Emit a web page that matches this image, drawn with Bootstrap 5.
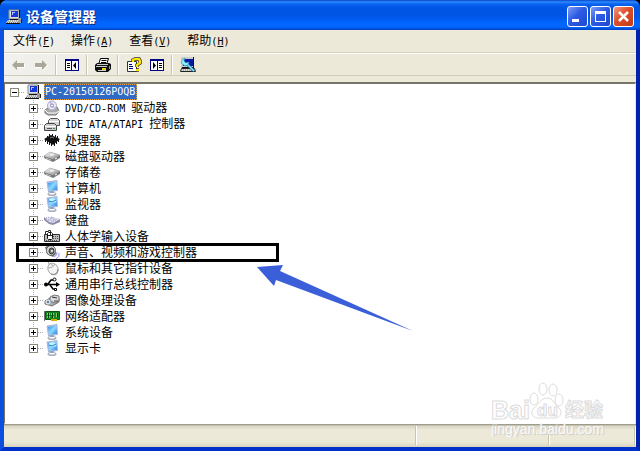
<!DOCTYPE html>
<html lang="zh-CN">
<head>
<meta charset="utf-8">
<meta name="viewport" content="width=device-width, initial-scale=1">
<title>设备管理器</title>
<link href="https://cdn.jsdelivr.net/npm/bootstrap@5.3.0/dist/css/bootstrap.min.css" rel="stylesheet">
<style>
body{background:#000;color:#000;font:12px/16px "Noto Sans CJK SC",sans-serif}
.window{border:solid #0a4fe0;border-width:0 4px 4px;border-color:#0a4fe0 #0022b0 #0030c8 #0a4fe0;border-radius:8px 8px 0 0;background:linear-gradient(90deg,#f1f1ef,#ece9d8 25%)}
.titlebar{height:30px;margin:0 -4px;padding:3px 6px 0;border-radius:7px 7px 0 0;background:linear-gradient(#0a45c8 0,#2a8cff 2px,#0a62f0 4px,#0055e3 8px,#0055e6 16px,#0066ff 23px,#0066ff 27px,#0040c0)}
.caption{font-size:14px;line-height:20px;padding-bottom:2px;font-weight:700;color:#fff;text-shadow:1px 1px #0a2a80}
.controls{gap:2px}
.ctl{width:21px;height:21px;border:1px solid #fff;border-radius:3px;background:linear-gradient(135deg,#7d9df5,#2c5be4 45%,#1f48d0)}
.ctl.quit{background:linear-gradient(135deg,#f09a80,#dd4e2a 45%,#c03a12)}
.menus{height:23px;padding-left:1px;border-bottom:1px solid #d8d2bd}
.menus .btn,.tools .btn{font-size:12px;line-height:16px;color:#000;border:0;border-radius:0}
.lat{font:10px/16px "DejaVu Sans Mono",monospace;white-space:pre}
.tools{height:23px;padding-left:2px;border-top:1px solid #fff;border-bottom:1px solid #d0ccb8}
.tools .btn{width:23px;height:22px}
.divider{width:2px;height:20px;margin:0 3px;border-left:1px solid #c8c4b0;border-right:1px solid #fff}
.client{margin-top:6px;padding:0 0 0 5px;background:#fff;border:1px solid #808078;border-width:2px 1px 1px;border-color:#77756a #ece9d8 #fff #77756a}
.row16{height:16px}
.twist{width:9px;height:9px;border:1px solid #8c8a78;background:linear-gradient(#000,#000) center/5px 1px no-repeat,#fff}
.twist.plus{background:linear-gradient(#000,#000) center/5px 1px no-repeat,linear-gradient(#000,#000) center/1px 5px no-repeat,#fff}
.dots{width:6px;height:1px;background:repeating-linear-gradient(90deg,#aaa 0 1px,transparent 1px 2px)}
.branch{padding-left:19px;background:repeating-linear-gradient(#aaa 0 1px,transparent 1px 2px) 23px 0/1px calc(100% - 8px) no-repeat}
.branch .name{margin-left:5px}
.picked{margin-left:3px;padding:0 2px 0 1px;background:#316ac5;color:#fff;outline:1px dotted #e6a040;outline-offset:-1px}
.frame{top:-1px;left:-13px;width:263px;height:19px;border:3px solid #000;pointer-events:none}
.arrow{left:253px;top:264px;pointer-events:none}
.status{height:23px;padding:2px 0;background:linear-gradient(#8b8978 0,#d8d5c4 2px,#ece9d8 6px,#ece9d8 18px,#d8d4bd)}
.status>div{border-right:1px solid #fff;box-shadow:inset -1px 0 #c8c4b0}
.cell-b{width:133px}.cell-c{width:86px}
.watermark{right:31px;bottom:10px;width:114px;pointer-events:none}
.address{text-shadow:1px 1px 1px #c8c8c8}
</style>
<script src="https://cdn.jsdelivr.net/npm/bootstrap@5.3.0/dist/js/bootstrap.bundle.min.js"></script>
</head>
<body>
<svg width="0" height="0" class="position-absolute" aria-hidden="true">
<defs>
<linearGradient id="g-screen" x2="1" y2="1"><stop stop-color="#2589e8"/><stop offset=".5" stop-color="#8fd8ff"/><stop offset="1" stop-color="#1877dc"/></linearGradient>
<linearGradient id="g-metal" x2="1" y2="1"><stop stop-color="#fff"/><stop offset="1" stop-color="#888"/></linearGradient>
<symbol id="i-pc" viewBox="0 0 16 16"><path d="M3 1h10v9H3z" fill="#ddd" stroke="#888"/><path d="M5 2h7v6H5z" fill="#1738d8"/><path d="M6 3h3v1H7v2H6z" fill="#a9c9ff"/><path d="M13 1h1v10H4v-1h9z" fill="#111"/><path d="M2 11h11l1 3H0z" fill="#ddd"/><path d="M2 12h10M1 13.500h12" stroke="#777" stroke-dasharray="1 1"/><path d="M0 14h14v1H0z" fill="#111"/><path d="M12 9h3v5h-3z" fill="#999"/><path d="M15 10h1v4h-1z" fill="#222"/></symbol>
<symbol id="i-dvd" viewBox="0 0 16 16"><path d="M1 10l4-3h8l2 4-3 4H4l-3-2z" fill="#aaa" stroke="#777"/><path d="M1 10l3 3h8l3-2" fill="none" stroke="#fff"/><circle cx="8" cy="5.500" r="4.500" fill="#e8e8f8" stroke="#aaaabd"/><path d="M8 5.500L5 2l2-1zM8 6l3 3 1-1z" fill="#b8b3ed"/><circle cx="8" cy="5.500" r="1.500" fill="#fff" stroke="#8584ae"/></symbol>
<symbol id="i-ide" viewBox="0 0 16 16"><path d="M4.500 4.500l2-2h7l2 2v5h-11z" fill="#d5d5d5" stroke="#555"/><path d="M5 5.500h10" stroke="#fff"/><path d="M.5 9.500l2-2h8l2 2v5H.5z" fill="#ccc" stroke="#444"/><path d="M1 10.500h11" stroke="#fff"/><path d="M3 12.500h5" stroke="#555"/><path d="M9 12.500h2" stroke="#1da238"/></symbol>
<symbol id="i-cpu" viewBox="0 0 16 16"><path d="M0 7l7-4 9 4-7 6z" fill="#111"/><path d="M1.500 7v3M3.500 8v4M5.500 9v4M7.500 10v4M10.500 11v3M12.500 9v3M14.500 7v3M3.500 4v3M5.500 2v3M8.500 2v2M11.500 3v2M13.500 4v3" stroke="#111"/><path d="M6 6l2-1 2 1" stroke="#777" fill="none"/></symbol>
<symbol id="i-disk" viewBox="0 0 16 16"><path d="M0 8l6-4 10 3v3l-7 4-9-4z" fill="#777"/><path d="M0 8l6-4 10 3-7 4z" fill="url(#g-metal)" stroke="#aaa" stroke-width=".5"/><path d="M5 7l3-1.500 3 1.500-3 1z" fill="#eee"/><path d="M2 10l5 2" stroke="#bbb"/><path d="M11 11l2-1" stroke="#fff"/></symbol>
<symbol id="i-mon" viewBox="0 0 16 16"><ellipse cx="8" cy="14" rx="4.500" ry="2" fill="#a9aec0"/><ellipse cx="8" cy="13.500" rx="3" ry="1" fill="#fff"/><path d="M6 9h4v4H6z" fill="#999fbe"/><path d="M3 2l10-1.500.5 10-9 1.500z" fill="#b8cce8" stroke="#8495bd" stroke-width=".6"/><path d="M4 3l8.500-1.500.5 8-8 1.500z" fill="url(#g-screen)"/></symbol>
<symbol id="i-mon2" viewBox="0 0 16 16"><use href="#i-mon"/><path d="M5 3l5-1v1l2 1v2l-4 1-3-1z" fill="#c7f4ff"/><path d="M5 5l3 1 4-2" fill="none" stroke="#187cc5"/></symbol>
<symbol id="i-key" viewBox="0 0 16 16"><path d="M0 5l7 0 9 2v3l-7 3-4-1-5-4z" fill="#8c8caa"/><path d="M0 5l7 0 9 2-7 4-4-1z" fill="#e8e8f8"/><path d="M2 6l8 4M4 5l8 4M7 5l6 3M4 9l5-4M7 10l5-3" stroke="#9c9cc8" stroke-dasharray="1 1"/></symbol>
<symbol id="i-hid" viewBox="0 0 16 16"><path d="M.5 6.500h15v7H.5z" fill="#bbb" stroke="#333"/><path d="M9 8.500h5M9 10.500h5M2 12.500h12" stroke="#555" stroke-dasharray="1 1"/><path d="M1.500 6V3.500h3V2.500h2v2" fill="none" stroke="#222"/><path d="M3.500 5.500l1-1h3l1 1v5l-1 1h-3l-1-1z" fill="#fff" stroke="#111"/><path d="M4 7.500h4M6.500 5v2" stroke="#222"/></symbol>
<symbol id="i-snd" viewBox="0 0 16 16"><path d="M1 3l5-2 5 3 1 6-3 3-6-3z" fill="#777"/><ellipse cx="7" cy="6.500" rx="4.500" ry="5" fill="#ddd" stroke="#666"/><ellipse cx="7.500" cy="7" rx="2.500" ry="3" fill="#777" stroke="#333"/><circle cx="8" cy="7" r="1" fill="#fff"/><path d="M10 13q3-1 3-5M12 15q4-2 3-6" fill="none" stroke="#8d91e9"/></symbol>
<symbol id="i-mouse" viewBox="0 0 16 16"><path d="M3 1q2 0 2 3" fill="none" stroke="#aaa"/><ellipse cx="9" cy="9" rx="5" ry="6" transform="rotate(-25 9 9)" fill="#f3f3f3" stroke="#aaa"/><path d="M4 8q4 1 7-4M7 3l2 4" fill="none" stroke="#aaa"/><path d="M7 14q6 2 7-5" fill="none" stroke="#888"/></symbol>
<symbol id="i-usb" viewBox="0 0 16 16"><path d="M2 8.500h11M4 8l3-4h3M6 9l3 4h2" fill="none" stroke="#000" stroke-width="1.500"/><circle cx="2" cy="8.500" r="2"/><path d="M12 6l4 2.500-4 2.500z"/><circle cx="10.500" cy="3.500" r="1.500" fill="#fff" stroke="#000"/><path d="M10.500 12.500h2v2h-2z" fill="#fff" stroke="#000"/></symbol>
<symbol id="i-cam" viewBox="0 0 16 16"><path d="M1 9l5-3h9v4l-7 4-7-2z" fill="#aaa" stroke="#777"/><path d="M6 5l4-2 5 1v5l-4 2-5-2z" fill="#d9d9df" stroke="#777"/><path d="M8 5l5 1" stroke="#333"/><circle cx="4" cy="10" r="2" fill="#5987b8" stroke="#fff"/><path d="M10 9h4" stroke="#444"/></symbol>
<symbol id="i-net" viewBox="0 0 16 16"><path d="M.5 3v10" stroke="#777"/><path d="M1.500 3.500h14v8h-14z" fill="#128a20" stroke="#075411"/><path d="M3 5h3v2H3zM7 5h3v2H7zM3 8h3v2H3zM8 8h2v2H8zM12 5h2v4h-2z" fill="#9ac66a"/><path d="M4.500 5v5M8.500 5v5M13.500 5v4" stroke="#073d09"/><path d="M7 11h6v2H7z" fill="#d7af00"/></symbol>
<symbol id="i-pane" viewBox="0 0 16 16"><path d="M1 2h14v12H1z" fill="#000080"/><path d="M2 4h5v9H2zM8 4h6v9H8z" fill="#fff"/><path d="M3 6.500h3M3 8.500h3M3 10.500h3" stroke="#000"/><path d="M12 5v7L9 8.500z"/></symbol>
</defs>
</svg>
<main class="window position-relative d-flex flex-column vh-100">
<header class="titlebar d-flex align-items-center">
<svg width="16" height="16" class="me-1" aria-hidden="true"><use href="#i-pc"/></svg>
<span class="caption flex-grow-1">设备管理器</span>
<div class="controls d-flex">
<button class="ctl p-0 d-flex" aria-label="最小化"><svg width="19" height="19"><path d="M4 12h7v3H4z" fill="#fff"/></svg></button>
<button class="ctl p-0 d-flex" aria-label="最大化"><svg width="19" height="19"><path d="M4 4h11v11H4zM5 7v7h9V7z" fill="#fff" fill-rule="evenodd"/></svg></button>
<button class="ctl quit p-0 d-flex" aria-label="关闭"><svg width="19" height="19"><path d="M5 5l9 9M14 5l-9 9" stroke="#fff" stroke-width="2.500"/></svg></button>
</div>
</header>
<nav class="menus d-flex align-items-center">
<button class="btn px-2 py-0">文件<span class="lat">(<u>F</u>)</span></button><button class="btn px-2 py-0">操作<span class="lat">(<u>A</u>)</span></button><button class="btn px-2 py-0">查看<span class="lat">(<u>V</u>)</span></button><button class="btn px-2 py-0">帮助<span class="lat">(<u>H</u>)</span></button>
</nav>
<div class="tools d-flex align-items-center" role="toolbar" aria-label="工具栏">
<button class="btn p-0 d-flex align-items-center justify-content-center" aria-label="后退"><svg width="16" height="16"><path d="M2 8l5-5v3h7v4H7v3z" fill="#aca899"/><path d="M7 10.500h7.500V7" fill="none" stroke="#fff"/></svg></button>
<button class="btn p-0 d-flex align-items-center justify-content-center" aria-label="前进"><svg width="16" height="16"><path d="M14 8L9 3v3H2v4h7v3z" fill="#aca899"/><path d="M2 10.500h7M9.500 13.500L15 8" fill="none" stroke="#fff"/></svg></button>
<div class="divider"></div>
<button class="btn p-0 d-flex align-items-center justify-content-center" aria-label="显示控制台树"><svg width="16" height="16"><use href="#i-pane"/></svg></button>
<div class="divider"></div>
<button class="btn p-0 d-flex align-items-center justify-content-center" aria-label="打印"><svg width="16" height="16"><path d="M5.500 1.500h8l-2 6h-8z" fill="#fff" stroke="#000"/><path d="M6.500 3.500h5M6 5.500h5" stroke="#000"/><path d="M0 8l2-2h12l2 1v5l-3 3H2l-2-2z" fill="#111"/><path d="M2 7.500h11M1 9.500h11M3 13.500h8" stroke="#ccc"/><path d="M7 12h4" stroke="#e8dc20" stroke-width="2"/><path d="M14.500 9v3" stroke="#999"/></svg></button>
<div class="divider"></div>
<button class="btn p-0 d-flex align-items-center justify-content-center" aria-label="帮助"><svg width="16" height="16"><path d="M1.500 4.500h9v10h-9z" fill="#fff" stroke="#333"/><path d="M3 7.500h3M3 9.500h4M3 11.500h4" stroke="#000080"/><path d="M7 5V3l2-1h4l1 2v2l-3 2v2M10 13h3" fill="none" stroke="#333" stroke-width="3.600"/><path d="M7 5V3l2-1h4l1 2v2l-3 2v2M10 13h3" fill="none" stroke="#ffe600" stroke-width="2.200"/></svg></button>
<button class="btn p-0 d-flex align-items-center justify-content-center" aria-label="显示操作窗格"><svg width="16" height="16"><path d="M1 2h14v12H1z" fill="#000080"/><path d="M2 4h6v9H2zM9 4h5v9H9z" fill="#fff"/><path d="M10 6.500h3M10 8.500h3M10 10.500h3" stroke="#000"/><path d="M4 5v7l3-3.500z"/></svg></button>
<div class="divider"></div>
<button class="btn p-0 d-flex align-items-center justify-content-center" aria-label="扫描硬件改动"><svg width="16" height="16"><path d="M1 0h13v11H1z" fill="#ccc"/><path d="M3 2h10v7H3z" fill="#0918a0"/><path d="M13 0h1v11H2v-1h11z" fill="#111"/><path d="M1.500 11.500h13l1 3H.5z" fill="#ddd" stroke="#222"/><path d="M3 13h9" stroke="#777" stroke-dasharray="1 1"/><path d="M7 7l7 7" stroke="#146090" stroke-width="3"/><path d="M6 6l8 8" stroke="#8cecff" stroke-width="1.500"/><path d="M5 1l-1 3 2 2 3-1-1 3-3 1-4-3 1-3z" fill="#8cefff" stroke="#2d91b0" stroke-width=".6"/></svg></button>
</div>
<section class="client flex-grow-1" aria-label="设备">
<div class="row16 d-flex align-items-center"><button class="twist p-0" aria-label="折叠"></button><span class="dots"></span><svg width="16" height="16"><use href="#i-pc"/></svg><span class="picked lat">PC-20150126POQB</span></div>
<ul class="branch list-unstyled mb-0">
<li class="row16 d-flex align-items-center"><button class="twist plus p-0" aria-label="展开"></button><span class="dots"></span><svg width="16" height="16"><use href="#i-dvd"/></svg><span class="name"><span class="lat">DVD/CD-ROM </span>驱动器</span></li>
<li class="row16 d-flex align-items-center"><button class="twist plus p-0" aria-label="展开"></button><span class="dots"></span><svg width="16" height="16"><use href="#i-ide"/></svg><span class="name"><span class="lat">IDE ATA/ATAPI </span>控制器</span></li>
<li class="row16 d-flex align-items-center"><button class="twist plus p-0" aria-label="展开"></button><span class="dots"></span><svg width="16" height="16"><use href="#i-cpu"/></svg><span class="name">处理器</span></li>
<li class="row16 d-flex align-items-center"><button class="twist plus p-0" aria-label="展开"></button><span class="dots"></span><svg width="16" height="16"><use href="#i-disk"/></svg><span class="name">磁盘驱动器</span></li>
<li class="row16 d-flex align-items-center"><button class="twist plus p-0" aria-label="展开"></button><span class="dots"></span><svg width="16" height="16"><use href="#i-disk"/></svg><span class="name">存储卷</span></li>
<li class="row16 d-flex align-items-center"><button class="twist plus p-0" aria-label="展开"></button><span class="dots"></span><svg width="16" height="16"><use href="#i-mon"/></svg><span class="name">计算机</span></li>
<li class="row16 d-flex align-items-center"><button class="twist plus p-0" aria-label="展开"></button><span class="dots"></span><svg width="16" height="16"><use href="#i-mon2"/></svg><span class="name">监视器</span></li>
<li class="row16 d-flex align-items-center"><button class="twist plus p-0" aria-label="展开"></button><span class="dots"></span><svg width="16" height="16"><use href="#i-key"/></svg><span class="name">键盘</span></li>
<li class="row16 d-flex align-items-center"><button class="twist plus p-0" aria-label="展开"></button><span class="dots"></span><svg width="16" height="16"><use href="#i-hid"/></svg><span class="name">人体学输入设备</span></li>
<li class="row16 d-flex align-items-center position-relative"><button class="twist plus p-0" aria-label="展开"></button><span class="dots"></span><svg width="16" height="16"><use href="#i-snd"/></svg><span class="name">声音、视频和游戏控制器</span><span class="frame position-absolute"></span></li>
<li class="row16 d-flex align-items-center"><button class="twist plus p-0" aria-label="展开"></button><span class="dots"></span><svg width="16" height="16"><use href="#i-mouse"/></svg><span class="name">鼠标和其它指针设备</span></li>
<li class="row16 d-flex align-items-center"><button class="twist plus p-0" aria-label="展开"></button><span class="dots"></span><svg width="16" height="16"><use href="#i-usb"/></svg><span class="name">通用串行总线控制器</span></li>
<li class="row16 d-flex align-items-center"><button class="twist plus p-0" aria-label="展开"></button><span class="dots"></span><svg width="16" height="16"><use href="#i-cam"/></svg><span class="name">图像处理设备</span></li>
<li class="row16 d-flex align-items-center"><button class="twist plus p-0" aria-label="展开"></button><span class="dots"></span><svg width="16" height="16"><use href="#i-net"/></svg><span class="name">网络适配器</span></li>
<li class="row16 d-flex align-items-center"><button class="twist plus p-0" aria-label="展开"></button><span class="dots"></span><svg width="16" height="16"><use href="#i-mon"/></svg><span class="name">系统设备</span></li>
<li class="row16 d-flex align-items-center"><button class="twist plus p-0" aria-label="展开"></button><span class="dots"></span><svg width="16" height="16"><use href="#i-mon2"/></svg><span class="name">显示卡</span></li>
</ul>
</section>
<footer class="status d-flex"><div class="flex-grow-1"></div><div class="cell-b"></div><div class="cell-c"></div></footer>
<svg class="arrow position-absolute" width="160" height="70" aria-hidden="true"><path d="M0 3L26 1l-3 6L156 67 19 16l-2 6z" fill="#3a5fd9"/></svg>
<svg class="watermark position-absolute" width="114" height="58" viewBox="0 0 114 58" font-family="Liberation Sans, sans-serif" fill="#fff" stroke="#dcdcdc" stroke-width="1">
<ellipse cx="43" cy="20" rx="4" ry="6"/><ellipse cx="52" cy="10" rx="4" ry="6"/><ellipse cx="62" cy="11" rx="4" ry="6"/><ellipse cx="68" cy="21" rx="4" ry="6"/>
<path d="M56 19c6 0 7 6 12 10 5 5 0 11-6 10H49c-7 1-11-5-6-10 5-4 7-10 13-10z"/>
<text x="0" y="40" font-size="25" font-weight="700">Bai</text><text x="46" y="37" font-size="17" font-weight="700">du</text><text x="74" y="38" font-size="19" font-weight="700" font-family="Noto Sans CJK SC, sans-serif">经验</text>
<text class="address" x="0" y="55" font-size="14" fill="#fafafa" stroke="none">jingyan.baidu.com</text></svg>
</main>
</body>
</html>
